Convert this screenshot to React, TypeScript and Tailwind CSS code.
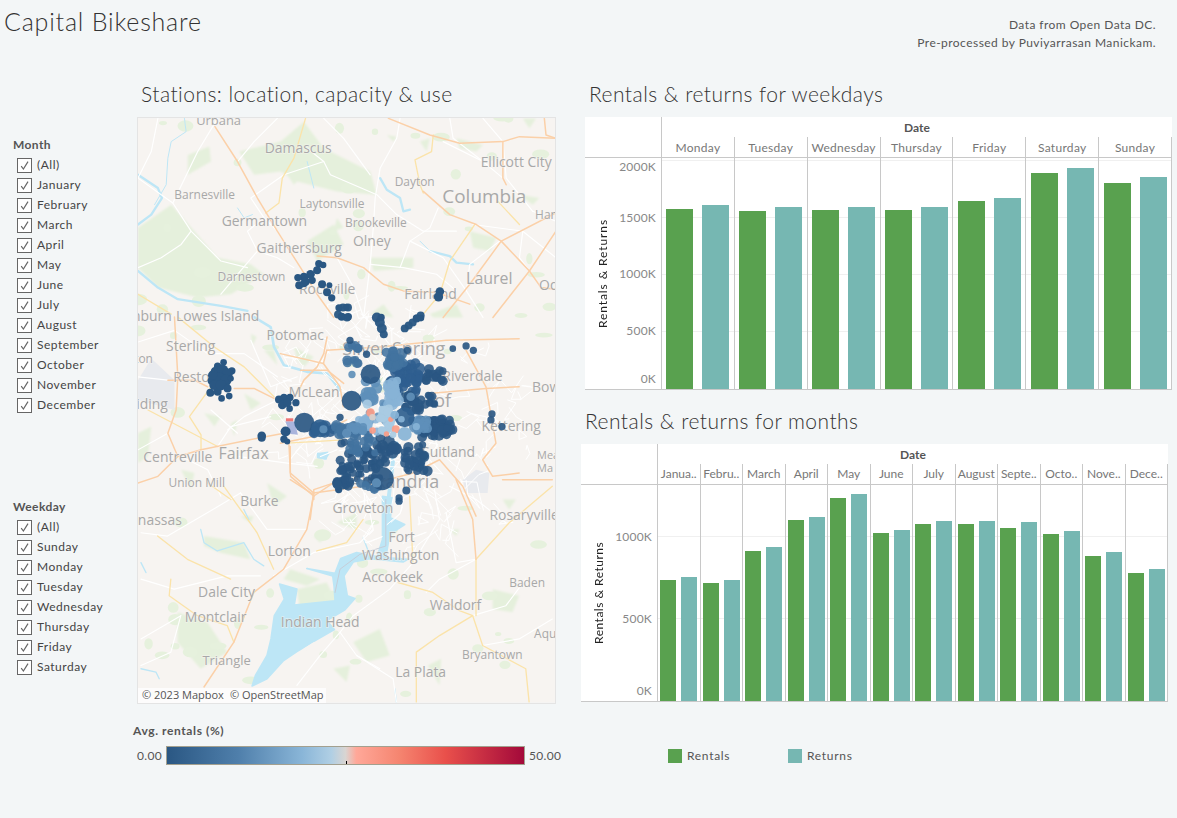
import React from "react";

const FONT = "font-['Lato','Liberation_Sans',sans-serif]";

const MONTHS = ["(All)", "January", "February", "March", "April", "May", "June", "July", "August", "September", "October", "November", "December"];
const WEEKDAYS = ["(All)", "Sunday", "Monday", "Tuesday", "Wednesday", "Thursday", "Friday", "Saturday"];

type Row = { label: string; rentals: number; returns: number };

const weekdayRows: Row[] = [
  { label: "Monday", rentals: 1579, returns: 1614 },
  { label: "Tuesday", rentals: 1561, returns: 1596 },
  { label: "Wednesday", rentals: 1570, returns: 1596 },
  { label: "Thursday", rentals: 1570, returns: 1596 },
  { label: "Friday", rentals: 1649, returns: 1675 },
  { label: "Saturday", rentals: 1895, returns: 1939 },
  { label: "Sunday", rentals: 1807, returns: 1860 },
];

const monthRows: Row[] = [
  { label: "Janua..", rentals: 738, returns: 756 },
  { label: "Febru..", rentals: 720, returns: 738 },
  { label: "March", rentals: 915, returns: 939 },
  { label: "April", rentals: 1104, returns: 1122 },
  { label: "May", rentals: 1238, returns: 1262 },
  { label: "June", rentals: 1024, returns: 1043 },
  { label: "July", rentals: 1079, returns: 1098 },
  { label: "August", rentals: 1079, returns: 1098 },
  { label: "Septe..", rentals: 1055, returns: 1091 },
  { label: "Octo..", rentals: 1018, returns: 1037 },
  { label: "Nove..", rentals: 884, returns: 909 },
  { label: "Dece..", rentals: 780, returns: 805 },
];

type Tick = { label: string; line: number; text: number };

const Filter = ({ title, items, className }: { title: string; items: string[]; className?: string }) => (
  <div className={className}>
    <div className="h-5 pl-[13px] flex items-center text-xs font-bold text-[#555] tracking-[0.4px]">{title}</div>
    {items.map((item) => (
      <div key={item} className="h-5 pl-[17px] flex items-center gap-[5px] text-xs text-[#444]">
        <span className="w-[15px] h-[15px] border border-[#666] bg-white flex items-center justify-center">
          <svg width="11" height="11" viewBox="0 0 11 11" fill="none">
            <path d="M2.2 6.2 L4.4 9 L9 1.6" stroke="#666" strokeWidth="1.2" />
          </svg>
        </span>
        <span className="tracking-[0.5px]">{item}</span>
      </div>
    ))}
  </div>
);

const BarChart = ({
  rows,
  ticks,
  scale,
  gridClass,
  barClass,
  gapClass,
  className,
  labelClass,
  axisClass,
}: {
  rows: Row[];
  ticks: Tick[];
  scale: number;
  gridClass: string;
  barClass: string;
  gapClass: string;
  className: string;
  labelClass: string;
  axisClass: string;
}) => (
  <div className={`bg-white flex flex-col ${className}`}>
    <div className="flex h-[41px] border-b border-[#c8c8c8] shrink-0">
      <div className="w-[76px] shrink-0" />
      <div className="flex-1 flex flex-col border-l border-[#c8c8c8]">
        <div className="h-5 pt-px flex items-center justify-center text-xs font-bold text-[#555]">Date</div>
        <div className={`h-5 grid ${gridClass}`}>
          {rows.map((r) => (
            <div key={r.label} className={`border-r border-[#c8c8c8] flex items-center justify-center overflow-hidden whitespace-nowrap text-[#777] ${labelClass}`}>
              {r.label}
            </div>
          ))}
        </div>
      </div>
    </div>
    <div className="flex flex-1 border-b border-[#c8c8c8]">
      <div className="w-[76px] shrink-0 relative">
        <div className={`absolute left-[10px] top-0 bottom-0 flex justify-center text-xs text-[#222] [writing-mode:vertical-rl] rotate-180 ${axisClass}`}>
          Rentals &amp; Returns
        </div>
        {ticks.map((t) => (
          <div key={t.label} className="absolute right-[5px] text-xs leading-none text-[#888] translate-y-1/2 tracking-[0.2px]" style={{ bottom: t.text }}>
            {t.label}
          </div>
        ))}
      </div>
      <div className={`flex-1 relative grid ${gridClass} border-l border-[#c8c8c8]`}>
        {ticks.slice(0, -1).map((t) => (
          <div key={t.label} className="absolute left-0 right-0 h-px bg-[#f0f0f0]" style={{ bottom: t.line }} />
        ))}
        {rows.map((r) => (
          <div key={r.label} className={`relative border-r border-[#c8c8c8] flex items-end justify-center ${gapClass}`}>
            <div className={`bg-[#59a14f] ${barClass}`} style={{ height: Math.round(r.rentals * scale) }} />
            <div className={`bg-[#76b7b2] ${barClass}`} style={{ height: Math.round(r.returns * scale) }} />
          </div>
        ))}
      </div>
    </div>
  </div>
);

// small seeded generator, the station cloud is too dense to list by hand
const seeded = (seed: number) => () => {
  seed = (seed + 0x6d2b79f5) | 0;
  let t = Math.imul(seed ^ (seed >>> 15), 1 | seed);
  t = (t + Math.imul(t ^ (t >>> 7), 61 | t)) ^ t;
  return ((t ^ (t >>> 14)) >>> 0) / 4294967296;
};

type Dot = [number, number, number, string];
const DARK = "#2a5783";
const DEEP = "#2f5f8f";
const MID = "#42739f";
const SOFT = "#5f8fb9";
const PALE = "#87b3d6";
const ICE = "#a9cbe3";
const SALMON = "#fb9c87";

// x, y, spread x, spread y, count, radius, colour; coordinates as in a 3x crop of the dense area
const blobs: [number, number, number, number, number, number, string][] = [
  [240, 395, 60, 60, 44, 12, DARK],
  [295, 395, 30, 50, 16, 12, DARK],
  [190, 455, 28, 15, 10, 12, DARK],
  [270, 470, 30, 10, 8, 12, MID],
  [130, 300, 40, 14, 14, 15, DEEP],
  [200, 295, 35, 18, 20, 15, MID],
  [465, 295, 55, 28, 56, 13, DARK],
  [410, 385, 35, 40, 30, 13, DARK],
  [375, 140, 45, 50, 42, 15, DEEP],
  [345, 85, 28, 25, 20, 15, MID],
  [220, 70, 18, 30, 12, 13, MID],
  [465, 135, 28, 20, 16, 13, DARK],
  [450, 205, 15, 20, 9, 12, DARK],
  [400, 220, 25, 25, 18, 14, DARK],
  [270, 180, 25, 30, 14, 14, SOFT],
  [255, 335, 45, 35, 20, 13, MID],
  [320, 345, 30, 25, 12, 15, DARK],
  [290, 235, 35, 40, 16, 14, SOFT],
  [265, 285, 30, 25, 12, 13, PALE],
  [340, 190, 18, 40, 24, 15, PALE],
  [320, 270, 16, 35, 30, 12, ICE],
  [420, 285, 25, 20, 14, 14, SOFT],
  [230, 300, 20, 12, 10, 12, SOFT],
];

const buildDots = (): Dot[] => {
  const rnd = seeded(42);
  const out: Dot[] = [];
  for (const [x, y, sx, sy, n, r, c] of blobs) {
    for (let i = 0; i < n; i++) {
      out.push([x + (rnd() * 2 - 1) * sx, y + (rnd() * 2 - 1) * sy, r * (0.8 + rnd() * 0.4), c]);
    }
  }
  return out;
};

const cloud = buildDots();

const bigDots: Dot[] = [
  [272, 132, 30, DARK],
  [215, 212, 30, DARK],
  [72, 278, 30, DARK],
  [120, 295, 27, DEEP],
  [307, 447, 35, DARK],
  [375, 262, 30, DEEP],
  [365, 268, 10, PALE],
  [216, 133, 11, SOFT],
  [352, 152, 12, PALE],
  [130, 298, 12, SOFT],
  [200, 310, 14, SOFT],
  [290, 460, 14, SOFT],
  [262, 222, 14, ICE],
  [340, 190, 17, PALE],
  [393, 200, 13, SOFT],
  [272, 248, 13, SALMON],
  [278, 262, 10, "#d9cfca"],
  [348, 298, 12, SALMON],
  [278, 302, 10, SALMON],
  [320, 312, 8, SALMON],
  [333, 268, 8, SALMON],
  [375, 312, 21, PALE],
  [410, 290, 11, PALE],
  [340, 315, 10, ICE],
  [300, 265, 12, ICE],
  [345, 255, 13, PALE],
  [180, 262, 11, DARK],
  [520, 55, 10, DARK],
  [560, 47, 11, DARK],
  [582, 60, 11, DARK],
  [210, 30, 11, DARK],
  [260, 72, 11, DARK],
  [383, 60, 11, DARK],
  [638, 252, 11, DARK],
  [635, 270, 11, DARK],
  [668, 290, 11, DARK],
  [380, 483, 12, DARK],
  [358, 505, 11, DARK],
  [358, 515, 11, DARK],
  [172, 465, 14, DARK],
  [375, 367, 12, DARK],
];

// Reston, Tysons and the western stations, coordinates as in a 3x crop from (137,310)
const westDots: [number, number, number][] = [
  [258, 156, 10], [240, 168, 11], [283, 182, 11], [222, 212, 12], [252, 265, 10], [275, 258, 10], [218, 248, 12], [240, 245, 12],
  [235, 185, 16], [255, 180, 17], [270, 190, 16], [245, 205, 18], [265, 210, 17], [230, 225, 15], [250, 225, 16], [270, 235, 12], [225, 195, 14], [280, 205, 9],
  [425, 268, 12], [440, 262, 11], [458, 262, 11], [476, 278, 11], [457, 296, 10], [435, 285, 13], [450, 278, 13],
  [373, 378, 13], [373, 384, 12], [445, 365, 15], [440, 388, 11], [450, 395, 9], [600, 520, 15], [605, 540, 11], [620, 510, 11],
];

// Rockville arm and the north east arms, coordinates as in a 3x crop from (137,117)
const northDots: [number, number, number][] = [
  [545, 438, 11], [558, 442, 10], [540, 458, 12], [520, 470, 13], [500, 478, 13], [482, 480, 11], [505, 492, 13], [525, 488, 11], [486, 503, 12], [500, 498, 11],
  [555, 500, 12], [577, 503, 9], [570, 524, 12], [584, 541, 11], [606, 571, 11], [628, 569, 10], [614, 598, 12], [634, 598, 11],
  [733, 600, 11], [840, 602, 11], [853, 602, 10], [910, 522, 13], [906, 538, 14],
];

const arms: [number, number, number][] = [
  [377, 317, 5], [380, 322, 5], [382, 328, 5], [384, 334, 4],
  [405, 328, 4], [409, 325, 4], [413, 322, 4], [417, 318, 4], [421, 315, 4], [343, 307, 4], [348, 307, 4], [338, 314, 4], [347, 317, 4],
];

const orangeA = [
  "M232,25 L300,130 L360,240 L420,340 L490,450 L540,530 L590,600",
  "M755,0 L880,50 L970,75 L1100,70 L1150,55 L1260,60",
  "M860,220 L940,290 L1020,320 L1095,370 L1180,460 L1215,510 L1260,515",
  "M1260,285 L1095,370 L1000,500 L920,600",
  "M1070,600 L1180,460 L1260,340",
  "M1100,70 L1100,180 L1110,200",
  "M540,415 L600,420 L680,450 L740,500 L800,520 L900,525 L1000,560",
  "M1225,0 L1230,50 L1260,60",
];
const yellowA = [
  "M505,0 L470,120 L435,180 L425,255 L385,285",
  "M890,50 L885,100 L835,125 L850,200 L860,225",
  "M1085,250 L1150,320",
  "M1015,320 L940,430 L910,530 L860,590",
  "M0,530 L100,590",
];
const whiteA = [
  "M0,180 L70,230 L105,255 L160,340 L250,430 L330,450",
  "M510,90 L560,130 L580,170 L720,230 L780,290 L860,340 L960,340",
  "M790,0 L780,60 L730,150 L715,240 L710,320 L700,440 L690,520 L680,600",
  "M560,130 L440,170 L340,240 L380,300 L420,340 L460,400",
  "M0,450 L70,420 L130,380 L160,340",
  "M600,420 L650,510 L680,600",
  "M700,440 L800,450 L900,470 L960,520",
  "M905,270 L880,330 L820,370 L790,450",
  "M1010,320 L1160,340 L1260,420",
  "M1160,340 L1150,420 L1180,460",
  "M1040,0 L1100,70 L1110,180 L1190,280",
  "M920,70 L1040,130 L1100,180",
  "M1090,370 L1000,440 L990,520 L1040,600",
  "M380,300 L330,340 L360,400 L420,420 L470,450",
  "M240,0 L180,100 L105,255",
  "M560,0 L620,60 L700,170",
  "M360,400 L300,470 L250,530",
  "M940,0 L950,60 L1040,130",
  "M1190,280 L1260,310",
  "M820,370 L920,420 L990,520",
  "M420,0 L350,70 L300,130",
  "M60,0 L40,100 L0,180",
];
const yellowB = [
  "M250,20 L350,160 L400,270",
  "M50,170 L140,240 L270,300",
  "M90,300 L85,350 L170,410 L260,440 L280,490",
  "M530,215 L620,190 L670,120",
  "M810,50 L820,250",
  "M775,310 L880,340 L960,395 L1000,410 L900,470 L830,520 L830,670",
  "M1000,410 L1030,500 L1160,570 L1170,670",
  "M1010,240 L1010,410",
  "M1010,240 L1110,130 L1240,20",
];
const orangeB = [
  "M190,625 L280,490 L340,340 L430,270 L500,150 L520,50 L580,10",
  "M950,0 L1000,120 L1010,240",
  "M1090,0 L1240,0",
  "M450,0 L520,45",
];
const whiteB = [
  "M820,250 L750,330 L640,410 L600,460 L650,530 L720,570",
  "M0,160 L80,170 L200,100 L300,40",
  "M360,290 L260,290 L100,330 L0,300",
  "M400,290 L520,220 L660,190",
  "M600,460 L540,530 L470,620",
  "M880,0 L900,120 L820,250",
  "M1100,130 L1010,60 L930,20",
  "M1010,240 L900,300 L860,340",
  "M1160,300 L1100,380 L1000,410",
  "M650,530 L760,600 L770,670",
  "M1030,500 L1140,480 L1240,420",
  "M120,410 L90,520 L0,560",
  "M0,480 L120,410",
  "M300,40 L380,150 L500,150",
  "M680,50 L700,150 L660,190",
  "M920,100 L950,250 L1010,240",
];
const orangeC = [
  "M110,20 L120,200 L115,300 L90,370 L120,440 L60,500 L0,520",
  "M90,210 L170,210 L210,230",
  "M290,235 L350,235 L410,265",
  "M190,420 L360,385 L440,370",
  "M120,440 L190,420",
  "M530,570 L530,540 L620,510",
  "M455,400 L460,500 L530,560",
  "M560,130 L540,170 L500,210 L480,250",
  "M490,180 L570,180 L620,220",
  "M570,80 L560,130",
];
const yellowC = [
  "M120,20 L230,110 L320,170 L410,260",
  "M220,230 L155,320 L190,375 L190,420",
  "M30,300 L240,410",
  "M210,520 L280,570",
  "M450,400 L620,390",
];
const whiteC = [
  "M0,95 L110,60 L210,130 L320,130 L420,200",
  "M340,90 L400,230 L480,200",
  "M220,300 L300,370",
  "M400,320 L280,350 L240,410",
  "M300,440 L450,460 L540,470",
  "M130,440 L210,480 L250,560",
  "M0,420 L90,370",
  "M420,270 L320,320 L270,360",
  "M0,200 L90,210",
  "M550,440 L600,420",
];
const orangeD = [
  "M140,60 L130,100 L180,170 L190,230",
  "M560,60 L620,170 L650,340 L610,390 L640,440 L720,430",
  "M0,70 L130,100",
  "M30,350 L30,430 L100,490 L250,470 L400,430 L480,390 L550,470 L590,560",
  "M100,490 L90,570",
  "M450,190 L620,175 L720,170",
  "M140,60 L300,50 L500,30 L720,25",
  "M0,340 L100,320 L200,270",
];

const greensA = [
  "M305,100 L430,70 L500,10 L560,90 L700,160 L720,230 L600,220 L480,190 L430,160 L350,170 Z",
  "M0,330 L100,260 L170,340 L240,420 L340,440 L380,470 L280,530 L180,540 L60,510 L0,450 Z",
  "M150,110 L215,85 L220,130 L150,170 Z",
  "M510,370 L590,320 L620,380 L540,430 Z",
  "M700,420 L830,420 L830,450 L710,460 Z",
  "M1000,340 L1080,360 L1060,400 L1010,390 Z",
  "M960,60 L1040,80 L1020,100 L970,90 Z",
  "M1150,230 L1210,240 L1190,260 Z",
  "M850,70 L880,60 L870,100 Z",
  "M750,50 L780,55 L770,70 Z",
  "M450,170 L490,180 L470,200 Z",
  "M1160,0 L1200,0 L1180,30 Z",
  "M880,590 L960,560 L980,600 L890,600 Z",
  "M700,590 L740,560 L770,600 Z",
  "M600,300 L620,330 L590,340 Z",
];
const greensB = [
  "M190,170 L310,190 L330,240 L240,220 L190,200 Z",
  "M110,400 L200,430 L260,520 L180,570 L110,490 Z",
  "M470,330 L560,310 L590,370 L480,400 Z",
  "M450,270 L540,300 L500,320 L430,300 Z",
  "M1060,330 L1140,350 L1120,400 L1060,390 Z",
  "M1090,60 L1130,60 L1110,90 Z",
  "M590,130 L650,100 L650,150 Z",
  "M640,490 L720,450 L750,530 L680,550 Z",
  "M930,150 L960,150 L950,170 Z",
  "M520,170 L555,170 L540,190 Z",
  "M580,570 L630,560 L620,610 Z",
  "M865,560 L905,540 L900,620 Z",
  "M380,10 L440,50 L400,80 Z",
  "M300,110 L340,110 L330,130 Z",
];
const greensC = [
  "M340,70 L358,80 L345,105 Z",
  "M470,110 L530,140 L500,170 L480,150 Z",
  "M200,310 L250,320 L230,350 Z",
  "M280,340 L300,330 L290,380 Z",
  "M320,250 L370,280 L340,300 Z",
  "M0,370 L40,350 L30,440 L0,460 Z",
  "M130,480 L170,490 L160,540 Z",
  "M380,120 L410,120 L420,165 Z",
];

type Label = [string, number, number, number, ("middle" | "end" | "start")?];
const labels: Label[] = [
  ["Urbana", 218, 119, 13],
  ["Damascus", 298, 146, 14],
  ["Ellicott City", 517, 160, 14],
  ["Dayton", 415, 180, 12],
  ["Columbia", 485, 195, 19],
  ["Barnesville", 204, 193, 12],
  ["Laytonsville", 332, 202, 12],
  ["Germantown", 264, 220, 14],
  ["Brookeville", 376, 221, 12],
  ["Olney", 372, 240, 14],
  ["Gaithersburg", 299, 247, 14],
  ["Darnestown", 251, 275, 12],
  ["Rockville", 327, 288, 14],
  ["Fairland", 431, 293, 14],
  ["Laurel", 490, 277, 16],
  ["Ham", 536, 213, 12, "start"],
  ["Odenton", 540, 284, 14, "start"],
  ["Ashburn", 171, 315, 14, "end"],
  ["Lowes Island", 217, 315, 14],
  ["Sterling", 190, 345, 14],
  ["Potomac", 295, 334, 14],
  ["Silver Spring", 394, 348, 18],
  ["Riverdale", 473, 375, 14],
  ["Bowie", 533, 386, 14, "start"],
  ["McLean", 314, 391, 14],
  ["Reston", 195, 376, 14],
  ["Brambleton", 152, 358, 12, "end"],
  ["South Riding", 167, 403, 14, "end"],
  ["Fairfax", 243, 453, 16],
  ["Centreville", 177, 457, 14],
  ["Union Mill", 196, 482, 12],
  ["Kettering", 512, 426, 14],
  ["Suitland", 449, 452, 14],
  ["Alexandria", 395, 481, 18],
  ["of", 443, 400, 18],
  ["Groveton", 363, 508, 14],
  ["Rosaryville", 525, 515, 14],
  ["Burke", 259, 501, 14],
  ["Manassas", 181, 520, 14, "end"],
  ["Lorton", 289, 551, 14],
  ["Fort", 402, 537, 14],
  ["Washington", 401, 555, 14],
  ["Accokeek", 393, 577, 14],
  ["Baden", 528, 583, 12],
  ["Dale City", 226, 592, 14],
  ["Waldorf", 456, 605, 14],
  ["Montclair", 215, 617, 14],
  ["Indian Head", 320, 623, 14],
  ["Aquasco", 535, 634, 12, "start"],
  ["Triangle", 226, 661, 13],
  ["Bryantown", 493, 655, 12],
  ["La Plata", 421, 673, 14],
  ["Mea", 538, 455, 11, "start"],
  ["Ma", 538, 468, 11, "start"],
];

const Lines = ({ d, stroke, width }: { d: string[]; stroke: string; width: number }) => (
  <g fill="none" stroke={stroke} strokeWidth={width} strokeLinejoin="round" strokeLinecap="round">
    {d.map((p) => (
      <path key={p} d={p} />
    ))}
  </g>
);

const cityStreets = () => {
  const rnd = seeded(7);
  const out: string[] = [];
  for (let i = 0; i < 170; i++) {
    const a = rnd() * Math.PI * 2;
    const l = Math.pow(rnd(), 0.7) * 125;
    let x = 395 + Math.cos(a) * l * 1.1;
    let y = 425 + Math.sin(a) * l;
    let p = `M${x.toFixed(1)},${y.toFixed(1)}`;
    for (let k = 0; k < 3; k++) {
      x += (rnd() - 0.5) * 34;
      y += (rnd() - 0.5) * 34;
      p += ` L${x.toFixed(1)},${y.toFixed(1)}`;
    }
    out.push(p);
  }
  return out;
};
const streets = cityStreets();

const patches = () => {
  const rnd = seeded(19);
  const out: [number, number, number, number][] = [];
  for (let i = 0; i < 90; i++) {
    out.push([137 + rnd() * 419, 117 + rnd() * 587, 3 + rnd() * 6, 2 + rnd() * 4]);
  }
  return out;
};
const greenPatches = patches();

const StationMap = () => (
  <div className="relative w-[419px] h-[587px] border border-[#e4e4e4] overflow-hidden">
    <svg viewBox="137 117 419 587" className="block w-full h-full font-['Open_Sans',sans-serif]">
      <defs>
        <filter id="soft" x="-10%" y="-10%" width="120%" height="120%">
          <feGaussianBlur stdDeviation="2.5" />
        </filter>
      </defs>
      <rect x="137" y="117" width="419" height="587" fill="#f7f4f1" />

      <g transform="translate(137 117) scale(0.3333)" fill="#e5f0dc" filter="url(#soft)">
        {greensA.map((p) => <path key={p} d={p} />)}
      </g>
      <g transform="translate(140 480) scale(0.3333)" fill="#e5f0dc" filter="url(#soft)">
        {greensB.map((p) => <path key={p} d={p} />)}
      </g>
      <g transform="translate(137 310) scale(0.3333)" fill="#e5f0dc" filter="url(#soft)">
        {greensC.map((p) => <path key={p} d={p} />)}
      </g>
      <g fill="#e6f1dd">
        {greenPatches.map(([x, y, rx, ry]) => (
          <ellipse key={`${x}-${y}`} cx={x} cy={y} rx={rx} ry={ry} />
        ))}
      </g>

      <g transform="translate(137 310) scale(0.3333)">
        <path d="M0,210 L40,145 L110,210 L110,300 L0,270 Z" fill="#e8eaee" />
      </g>
      <g transform="translate(280 330) scale(0.3333)">
        <path d="M550,450 L590,420 L630,430 L625,490 L560,490 Z" fill="#e8eaee" />
      </g>

      {/* rivers and lakes */}
      <g transform="translate(137 117) scale(0.3333)">
        <Lines stroke="#bde6f6" width={7} d={["M0,170 L60,210 L72,240 L40,290 L0,320", "M0,460 L60,510 L120,545 L250,565 L330,580"]} />
        <Lines stroke="#bde6f6" width={3} d={["M140,0 L145,40 L100,70 L90,120 L85,200 L50,260", "M300,270 L320,300 L345,290", "M510,130 L530,210", "M850,370 L880,400"]} />
        <Lines stroke="#bde6f6" width={7} d={["M730,180 L750,215 L790,240 L800,280 L820,275", "M880,400 L940,415 L960,435 L1010,440"]} />
      </g>
      <g transform="translate(137 310) scale(0.3333)">
        <Lines stroke="#bde6f6" width={8} d={["M350,20 L400,50 L410,110 L440,165 L510,185 L570,190 L610,240"]} />
        <path d="M540,425 L555,440 L580,430 L565,450 L540,445 Z" fill="#bde6f6" />
      </g>
      <g transform="translate(280 330) scale(0.3333)">
        <Lines stroke="#bde6f6" width={12} d={["M350,340 L340,390 L325,520 L325,570"]} />
        <path d="M110,370 L145,365 L140,390 L110,385 Z" fill="#bde6f6" />
      </g>
      <g transform="translate(140 480) scale(0.3333)" fill="#bde6f6" stroke="#bde6f6" strokeWidth="5" strokeLinejoin="round">
        <path d="M728,50 L757,55 L752,115 L795,135 L750,165 L738,235 L805,240 L790,248 L690,238 L640,248 L612,290 L622,350 L645,358 L615,392 L560,425 L583,452 L520,488 L470,518 L430,545 L380,600 L335,622 L345,590 L380,530 L392,480 L402,410 L432,360 L418,315 L470,330 L462,378 L585,365 L582,320 L578,290 L500,268 L585,282 L602,238 L650,220 L712,232 L728,180 Z" />
        <path d="M490,510 L520,490 L540,500 L500,515 Z" fill="#f7f4f1" stroke="none" />
      </g>
      <g transform="translate(140 480) scale(0.3333)">
        <Lines stroke="#bde6f6" width={4} d={["M180,150 L190,190 L230,215 L310,190 L340,240 L370,260", "M0,570 L45,580 L55,600", "M0,250 L15,280", "M670,175 L685,215", "M765,630 L770,670", "M310,90 L325,120"]} />
        <Lines stroke="#c6cdd8" width={3} d={["M738,60 L738,200 L660,225 L600,270 L585,340"]} />
      </g>

      {/* streets */}
      <Lines stroke="#ffffff" width={1} d={streets} />
      <g transform="translate(137 117) scale(0.3333)">
        <Lines stroke="#ffffff" width={3.5} d={whiteA} />
        <Lines stroke="#fbe3a9" width={4} d={yellowA} />
        <Lines stroke="#fbd0a8" width={4.5} d={orangeA} />
      </g>
      <g transform="translate(140 480) scale(0.3333)">
        <Lines stroke="#ffffff" width={3.5} d={whiteB} />
        <Lines stroke="#fbe3a9" width={4} d={yellowB} />
        <Lines stroke="#fbd0a8" width={4.5} d={orangeB} />
      </g>
      <g transform="translate(137 310) scale(0.3333)">
        <Lines stroke="#ffffff" width={3.5} d={whiteC} />
        <Lines stroke="#fbe3a9" width={4} d={yellowC} />
        <Lines stroke="#fbd0a8" width={4.5} d={orangeC} />
        <rect x="446" y="325" width="22" height="10" fill="#e77" />
        <path d="M444,335 L472,335 L482,375 L460,372 Z" fill="#a9b4dc" />
      </g>
      <g transform="translate(280 330) scale(0.3333)">
        <Lines stroke="#fbd0a8" width={4.5} d={orangeD} />
      </g>

      {labels.map(([text, x, y, size, anchor]) => (
        <text key={text} x={x} y={y} fontSize={size} textAnchor={anchor ?? "middle"} dominantBaseline="central" fill="#a8a8a8" stroke="#f7f4f1" strokeOpacity="0.6" strokeWidth="1.5" paintOrder="stroke">
          {text}
        </text>
      ))}

      {/* stations */}
      <g fill={DARK} fillOpacity="0.96">
        {arms.map(([x, y, r]) => (
          <circle key={`${x}-${y}`} cx={x} cy={y} r={r} />
        ))}
      </g>
      <g transform="translate(137 117) scale(0.3333)" fill={DARK}>
        {northDots.map(([x, y, r]) => (
          <circle key={`${x}-${y}`} cx={x} cy={y} r={r} />
        ))}
      </g>
      <g transform="translate(137 310) scale(0.3333)" fill={DARK}>
        {westDots.map(([x, y, r]) => (
          <circle key={`${x}-${y}`} cx={x} cy={y} r={r} />
        ))}
      </g>
      <g transform="translate(280 330) scale(0.3333)">
        {cloud.map(([x, y, r, c], i) => (
          <circle key={i} cx={x} cy={y} r={r} fill={c} fillOpacity="0.88" />
        ))}
        {bigDots.map(([x, y, r, c], i) => (
          <circle key={i} cx={x} cy={y} r={r} fill={c} fillOpacity="0.92" />
        ))}
      </g>
    </svg>
    <div className="absolute left-0 bottom-0 h-[15px] w-[188px] pl-1 bg-white/75 flex items-center gap-[6px] text-[11px] text-[#555] font-['Open_Sans',sans-serif] whitespace-nowrap">
      <span>© 2023 Mapbox</span>
      <span>© OpenStreetMap</span>
    </div>
  </div>
);

const App = () => {
  return (
    <div className={`w-[1177px] h-[818px] overflow-hidden bg-[#f3f6f7] ${FONT}`}>
      <header className="h-[84px] flex justify-between">
        <h1 className="pl-1 pt-1 text-[25px] leading-[34px] font-light text-[#333] tracking-[0.8px]">Capital Bikeshare</h1>
        <div className="pt-4 pr-[21px] text-right text-xs leading-[18px] text-[#555] tracking-[0.45px]">
          <p>Data from Open Data DC.</p>
          <p>Pre-processed by Puviyarrasan Manickam.</p>
        </div>
      </header>
      <main className="flex">
        <aside className="w-[133px] shrink-0 pt-[51px]">
          <Filter title="Month" items={MONTHS} />
          <Filter title="Weekday" items={WEEKDAYS} className="mt-[82px]" />
        </aside>
        <section className="w-[448px] shrink-0">
          <h2 className="h-[22px] pl-2 text-[21px] leading-[20px] font-light text-[#333] tracking-[0.47px]">Stations: location, capacity &amp; use</h2>
          <div className="mt-[11px] ml-1">
            <StationMap />
          </div>
          <div className="mt-[18px] text-xs font-bold text-[#555] h-[18px] flex items-center tracking-[0.6px]">Avg. rentals (%)</div>
          <div className="mt-[6px] flex items-center text-xs text-[#555]">
            <span className="w-[29px] text-right tracking-[0.3px]">0.00</span>
            <div className="relative ml-1 w-[359px] h-[19px] border border-[#a3a08f] bg-[linear-gradient(to_right,#2a5783,#4f7fab_20%,#8ab6d8_38%,#b0cfe4_46%,#d9d5d2_50%,#ffa899_53%,#f58570_65%,#e9504b_78%,#a3093a)]">
              <span className="absolute left-1/2 bottom-0 w-px h-[3px] bg-black" />
            </div>
            <span className="ml-1 tracking-[0.3px]">50.00</span>
          </div>
        </section>
        <section className="flex-1">
          <h2 className="h-[22px] pl-[8px] text-[21px] leading-[20px] font-light text-[#333] tracking-[0.47px]">Rentals &amp; returns for weekdays</h2>
          <BarChart
            rows={weekdayRows}
            scale={0.114}
            gridClass="grid-cols-7"
            barClass="w-[27px]"
            gapClass="gap-[9px]"
            labelClass="text-xs tracking-[0.3px] pt-px"
            axisClass="tracking-[0.9px]"
            className="mt-[11px] ml-1 w-[587px] h-[273px]"
            ticks={[
              { label: "2000K", line: 228, text: 222 },
              { label: "1500K", line: 171, text: 171 },
              { label: "1000K", line: 114, text: 115 },
              { label: "500K", line: 57, text: 58 },
              { label: "0K", line: 0, text: 10 },
            ]}
          />
          <h2 className="mt-[21px] h-[22px] pl-[4px] text-[21px] leading-[20px] font-light text-[#333] tracking-[0.47px]">Rentals &amp; returns for months</h2>
          <BarChart
            rows={monthRows}
            scale={0.164}
            gridClass="grid-cols-12"
            barClass="w-4"
            gapClass="gap-[5px]"
            labelClass="text-xs"
            axisClass="tracking-[0.5px]"
            className="mt-[11px] w-[587px] h-[258px]"
            ticks={[
              { label: "1000K", line: 164, text: 164 },
              { label: "500K", line: 82, text: 82 },
              { label: "0K", line: 0, text: 10 },
            ]}
          />
          <div className="mt-[46px] ml-[87px] flex text-xs text-[#555] tracking-[0.7px]">
            <div className="w-[120px] flex items-center gap-[5px]">
              <span className="w-[14px] h-[14px] bg-[#59a14f]" />
              Rentals
            </div>
            <div className="flex items-center gap-[5px]">
              <span className="w-[14px] h-[14px] bg-[#76b7b2]" />
              Returns
            </div>
          </div>
        </section>
      </main>
    </div>
  );
};

export default App;
